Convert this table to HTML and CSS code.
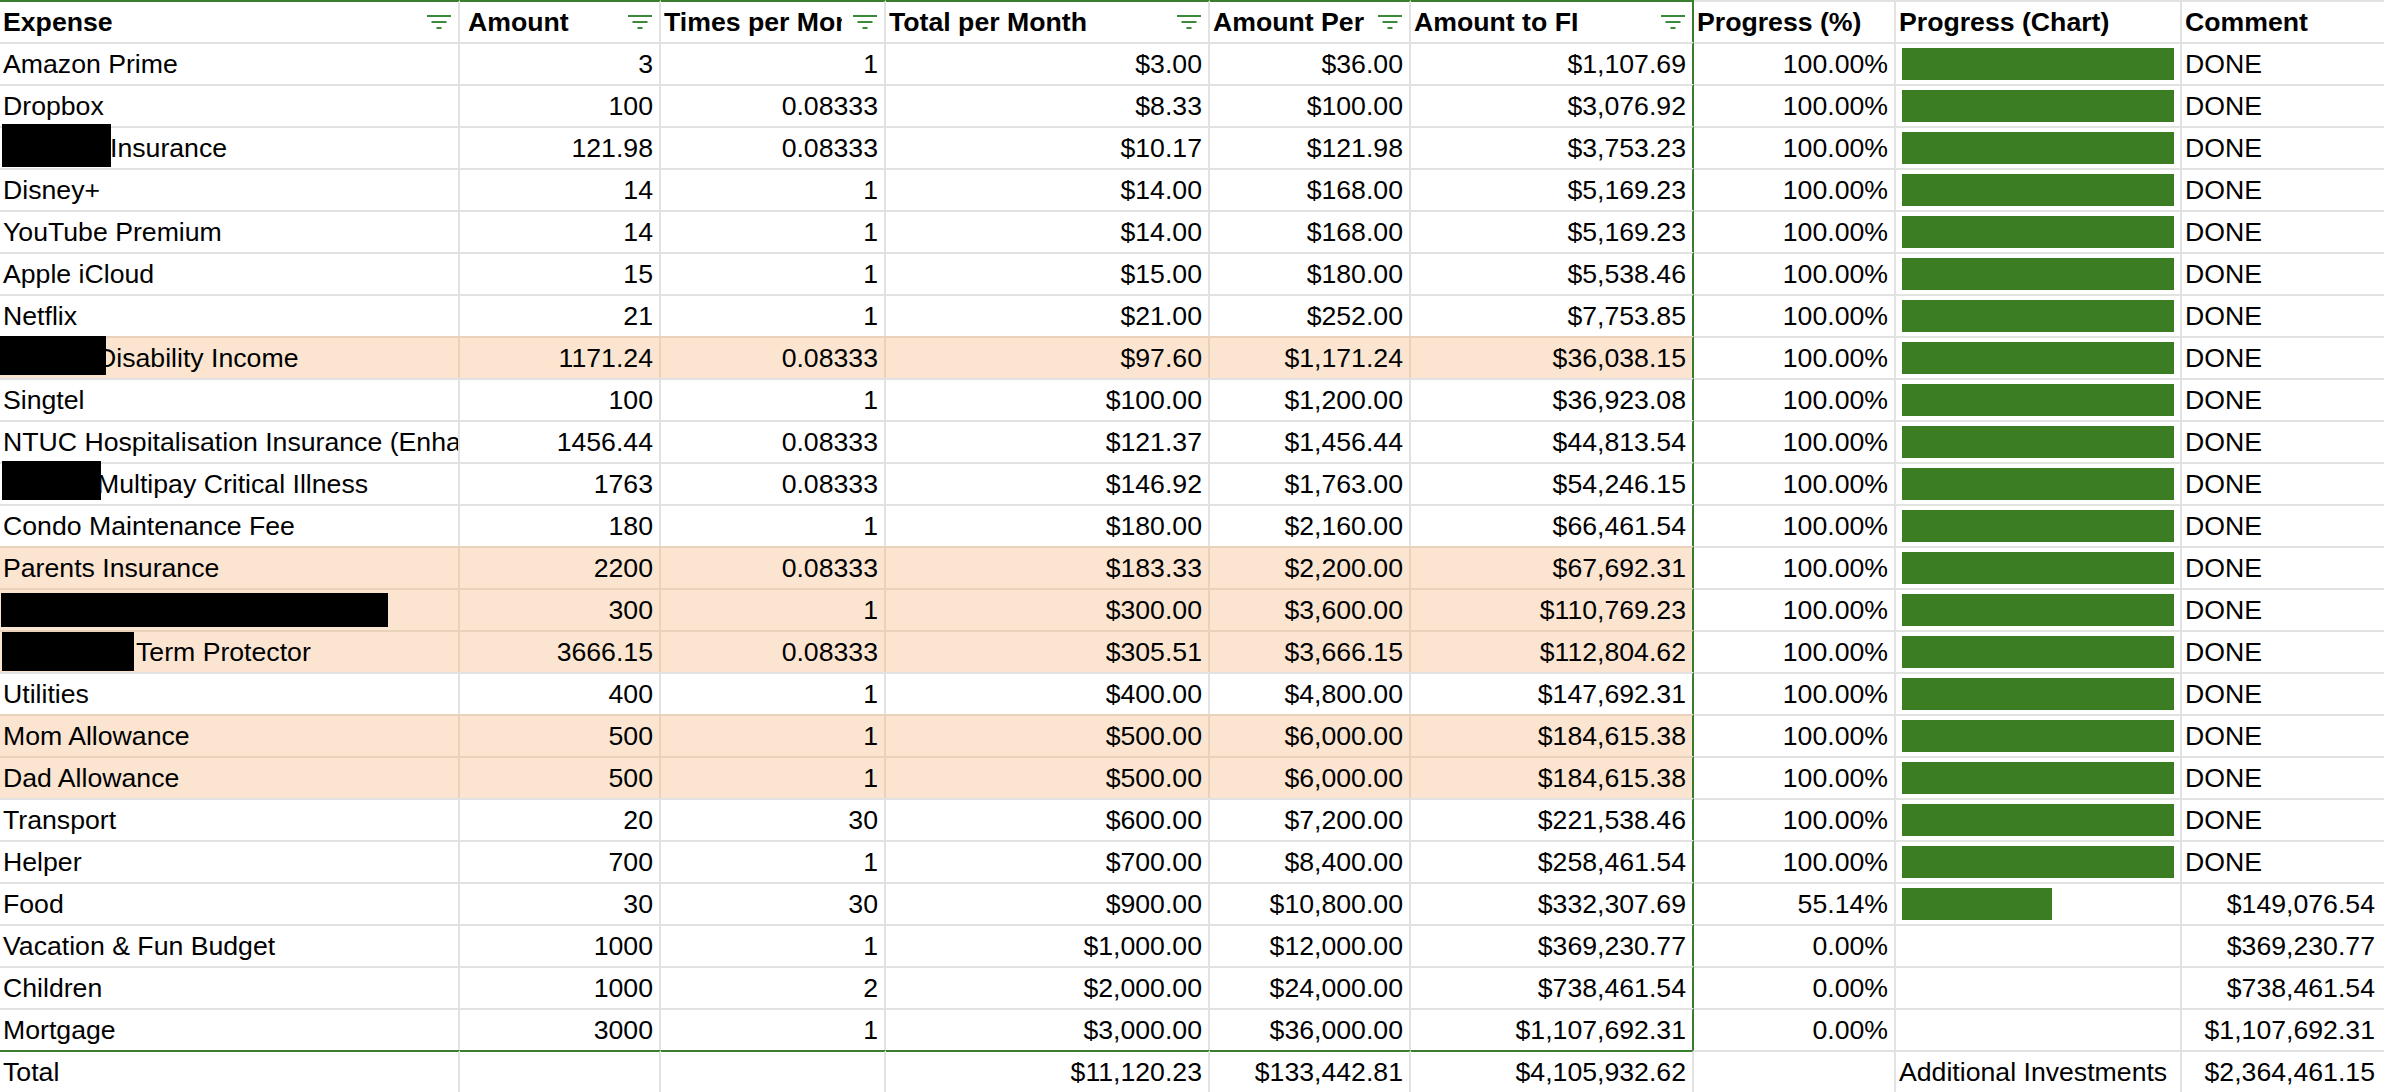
FILE: index.html
```html
<!DOCTYPE html>
<html>
<head>
<meta charset="utf-8">
<title>Expenses</title>
<link rel="stylesheet" href="styles.css">
</head>
<body>
<div class="sheet">
  <!-- header -->
  <div class="c h gt"><span class="lbl">Expense</span><svg class="fi" viewBox="0 0 24 16" width="24" height="16"><rect x="0" y="1" width="24" height="2"/><rect x="4.5" y="7" width="15" height="2"/><rect x="9.5" y="13" width="5" height="2"/></svg></div>
  <div class="c h gt pl8"><span class="lbl">Amount</span><svg class="fi" viewBox="0 0 24 16" width="24" height="16"><rect x="0" y="1" width="24" height="2"/><rect x="4.5" y="7" width="15" height="2"/><rect x="9.5" y="13" width="5" height="2"/></svg></div>
  <div class="c h gt"><span class="lbl">Times per Month</span><svg class="fi" viewBox="0 0 24 16" width="24" height="16"><rect x="0" y="1" width="24" height="2"/><rect x="4.5" y="7" width="15" height="2"/><rect x="9.5" y="13" width="5" height="2"/></svg></div>
  <div class="c h gt"><span class="lbl">Total per Month</span><svg class="fi" viewBox="0 0 24 16" width="24" height="16"><rect x="0" y="1" width="24" height="2"/><rect x="4.5" y="7" width="15" height="2"/><rect x="9.5" y="13" width="5" height="2"/></svg></div>
  <div class="c h gt"><span class="lbl">Amount Per Year</span><svg class="fi" viewBox="0 0 24 16" width="24" height="16"><rect x="0" y="1" width="24" height="2"/><rect x="4.5" y="7" width="15" height="2"/><rect x="9.5" y="13" width="5" height="2"/></svg></div>
  <div class="c h gt gr"><span class="lbl">Amount to FI</span><svg class="fi" viewBox="0 0 24 16" width="24" height="16"><rect x="0" y="1" width="24" height="2"/><rect x="4.5" y="7" width="15" height="2"/><rect x="9.5" y="13" width="5" height="2"/></svg></div>
  <div class="c h"><span class="lbl">Progress (%)</span></div>
  <div class="c h"><span class="lbl">Progress (Chart)</span></div>
  <div class="c h last"><span class="lbl">Comment</span></div>

  <!-- 1 -->
  <div class="c">Amazon Prime</div>
  <div class="c r">3</div>
  <div class="c r">1</div>
  <div class="c r">$3.00</div>
  <div class="c r">$36.00</div>
  <div class="c r gr">$1,107.69</div>
  <div class="c r">100.00%</div>
  <div class="c bc"><div class="bar" style="width:100%"></div></div>
  <div class="c last">DONE</div>

  <!-- 2 -->
  <div class="c">Dropbox</div>
  <div class="c r">100</div>
  <div class="c r">0.08333</div>
  <div class="c r">$8.33</div>
  <div class="c r">$100.00</div>
  <div class="c r gr">$3,076.92</div>
  <div class="c r">100.00%</div>
  <div class="c bc"><div class="bar" style="width:100%"></div></div>
  <div class="c last">DONE</div>

  <!-- 3 -->
  <div class="c rel p110"><span class="redact rd-ins"></span>Insurance</div>
  <div class="c r">121.98</div>
  <div class="c r">0.08333</div>
  <div class="c r">$10.17</div>
  <div class="c r">$121.98</div>
  <div class="c r gr">$3,753.23</div>
  <div class="c r">100.00%</div>
  <div class="c bc"><div class="bar" style="width:100%"></div></div>
  <div class="c last">DONE</div>

  <!-- 4 -->
  <div class="c">Disney+</div>
  <div class="c r">14</div>
  <div class="c r">1</div>
  <div class="c r">$14.00</div>
  <div class="c r">$168.00</div>
  <div class="c r gr">$5,169.23</div>
  <div class="c r">100.00%</div>
  <div class="c bc"><div class="bar" style="width:100%"></div></div>
  <div class="c last">DONE</div>

  <!-- 5 -->
  <div class="c">YouTube Premium</div>
  <div class="c r">14</div>
  <div class="c r">1</div>
  <div class="c r">$14.00</div>
  <div class="c r">$168.00</div>
  <div class="c r gr">$5,169.23</div>
  <div class="c r">100.00%</div>
  <div class="c bc"><div class="bar" style="width:100%"></div></div>
  <div class="c last">DONE</div>

  <!-- 6 -->
  <div class="c">Apple iCloud</div>
  <div class="c r">15</div>
  <div class="c r">1</div>
  <div class="c r">$15.00</div>
  <div class="c r">$180.00</div>
  <div class="c r gr">$5,538.46</div>
  <div class="c r">100.00%</div>
  <div class="c bc"><div class="bar" style="width:100%"></div></div>
  <div class="c last">DONE</div>

  <!-- 7 -->
  <div class="c">Netflix</div>
  <div class="c r">21</div>
  <div class="c r">1</div>
  <div class="c r">$21.00</div>
  <div class="c r">$252.00</div>
  <div class="c r gr">$7,753.85</div>
  <div class="c r">100.00%</div>
  <div class="c bc"><div class="bar" style="width:100%"></div></div>
  <div class="c last">DONE</div>

  <!-- 8 -->
  <div class="c hl rel p97"><span class="redact rd-dis"></span>Disability Income</div>
  <div class="c r hl">1171.24</div>
  <div class="c r hl">0.08333</div>
  <div class="c r hl">$97.60</div>
  <div class="c r hl">$1,171.24</div>
  <div class="c r hl gr">$36,038.15</div>
  <div class="c r">100.00%</div>
  <div class="c bc"><div class="bar" style="width:100%"></div></div>
  <div class="c last">DONE</div>

  <!-- 9 -->
  <div class="c">Singtel</div>
  <div class="c r">100</div>
  <div class="c r">1</div>
  <div class="c r">$100.00</div>
  <div class="c r">$1,200.00</div>
  <div class="c r gr">$36,923.08</div>
  <div class="c r">100.00%</div>
  <div class="c bc"><div class="bar" style="width:100%"></div></div>
  <div class="c last">DONE</div>

  <!-- 10 -->
  <div class="c">NTUC Hospitalisation Insurance (Enhanced)</div>
  <div class="c r">1456.44</div>
  <div class="c r">0.08333</div>
  <div class="c r">$121.37</div>
  <div class="c r">$1,456.44</div>
  <div class="c r gr">$44,813.54</div>
  <div class="c r">100.00%</div>
  <div class="c bc"><div class="bar" style="width:100%"></div></div>
  <div class="c last">DONE</div>

  <!-- 11 -->
  <div class="c rel p97"><span class="redact rd-mul"></span>Multipay Critical Illness</div>
  <div class="c r">1763</div>
  <div class="c r">0.08333</div>
  <div class="c r">$146.92</div>
  <div class="c r">$1,763.00</div>
  <div class="c r gr">$54,246.15</div>
  <div class="c r">100.00%</div>
  <div class="c bc"><div class="bar" style="width:100%"></div></div>
  <div class="c last">DONE</div>

  <!-- 12 -->
  <div class="c">Condo Maintenance Fee</div>
  <div class="c r">180</div>
  <div class="c r">1</div>
  <div class="c r">$180.00</div>
  <div class="c r">$2,160.00</div>
  <div class="c r gr">$66,461.54</div>
  <div class="c r">100.00%</div>
  <div class="c bc"><div class="bar" style="width:100%"></div></div>
  <div class="c last">DONE</div>

  <!-- 13 -->
  <div class="c hl">Parents Insurance</div>
  <div class="c r hl">2200</div>
  <div class="c r hl">0.08333</div>
  <div class="c r hl">$183.33</div>
  <div class="c r hl">$2,200.00</div>
  <div class="c r hl gr">$67,692.31</div>
  <div class="c r">100.00%</div>
  <div class="c bc"><div class="bar" style="width:100%"></div></div>
  <div class="c last">DONE</div>

  <!-- 14 -->
  <div class="c hl rel"><span class="redact rd-full"></span></div>
  <div class="c r hl">300</div>
  <div class="c r hl">1</div>
  <div class="c r hl">$300.00</div>
  <div class="c r hl">$3,600.00</div>
  <div class="c r hl gr">$110,769.23</div>
  <div class="c r">100.00%</div>
  <div class="c bc"><div class="bar" style="width:100%"></div></div>
  <div class="c last">DONE</div>

  <!-- 15 -->
  <div class="c hl rel p136"><span class="redact rd-term"></span>Term Protector</div>
  <div class="c r hl">3666.15</div>
  <div class="c r hl">0.08333</div>
  <div class="c r hl">$305.51</div>
  <div class="c r hl">$3,666.15</div>
  <div class="c r hl gr">$112,804.62</div>
  <div class="c r">100.00%</div>
  <div class="c bc"><div class="bar" style="width:100%"></div></div>
  <div class="c last">DONE</div>

  <!-- 16 -->
  <div class="c">Utilities</div>
  <div class="c r">400</div>
  <div class="c r">1</div>
  <div class="c r">$400.00</div>
  <div class="c r">$4,800.00</div>
  <div class="c r gr">$147,692.31</div>
  <div class="c r">100.00%</div>
  <div class="c bc"><div class="bar" style="width:100%"></div></div>
  <div class="c last">DONE</div>

  <!-- 17 -->
  <div class="c hl">Mom Allowance</div>
  <div class="c r hl">500</div>
  <div class="c r hl">1</div>
  <div class="c r hl">$500.00</div>
  <div class="c r hl">$6,000.00</div>
  <div class="c r hl gr">$184,615.38</div>
  <div class="c r">100.00%</div>
  <div class="c bc"><div class="bar" style="width:100%"></div></div>
  <div class="c last">DONE</div>

  <!-- 18 -->
  <div class="c hl">Dad Allowance</div>
  <div class="c r hl">500</div>
  <div class="c r hl">1</div>
  <div class="c r hl">$500.00</div>
  <div class="c r hl">$6,000.00</div>
  <div class="c r hl gr">$184,615.38</div>
  <div class="c r">100.00%</div>
  <div class="c bc"><div class="bar" style="width:100%"></div></div>
  <div class="c last">DONE</div>

  <!-- 19 -->
  <div class="c">Transport</div>
  <div class="c r">20</div>
  <div class="c r">30</div>
  <div class="c r">$600.00</div>
  <div class="c r">$7,200.00</div>
  <div class="c r gr">$221,538.46</div>
  <div class="c r">100.00%</div>
  <div class="c bc"><div class="bar" style="width:100%"></div></div>
  <div class="c last">DONE</div>

  <!-- 20 -->
  <div class="c">Helper</div>
  <div class="c r">700</div>
  <div class="c r">1</div>
  <div class="c r">$700.00</div>
  <div class="c r">$8,400.00</div>
  <div class="c r gr">$258,461.54</div>
  <div class="c r">100.00%</div>
  <div class="c bc"><div class="bar" style="width:100%"></div></div>
  <div class="c last">DONE</div>

  <!-- 21 -->
  <div class="c">Food</div>
  <div class="c r">30</div>
  <div class="c r">30</div>
  <div class="c r">$900.00</div>
  <div class="c r">$10,800.00</div>
  <div class="c r gr">$332,307.69</div>
  <div class="c r">55.14%</div>
  <div class="c bc"><div class="bar" style="width:55.14%"></div></div>
  <div class="c r last">$149,076.54</div>

  <!-- 22 -->
  <div class="c">Vacation &amp; Fun Budget</div>
  <div class="c r">1000</div>
  <div class="c r">1</div>
  <div class="c r">$1,000.00</div>
  <div class="c r">$12,000.00</div>
  <div class="c r gr">$369,230.77</div>
  <div class="c r">0.00%</div>
  <div class="c bc"></div>
  <div class="c r last">$369,230.77</div>

  <!-- 23 -->
  <div class="c">Children</div>
  <div class="c r">1000</div>
  <div class="c r">2</div>
  <div class="c r">$2,000.00</div>
  <div class="c r">$24,000.00</div>
  <div class="c r gr">$738,461.54</div>
  <div class="c r">0.00%</div>
  <div class="c bc"></div>
  <div class="c r last">$738,461.54</div>

  <!-- 24 -->
  <div class="c">Mortgage</div>
  <div class="c r">3000</div>
  <div class="c r">1</div>
  <div class="c r">$3,000.00</div>
  <div class="c r">$36,000.00</div>
  <div class="c r gr">$1,107,692.31</div>
  <div class="c r">0.00%</div>
  <div class="c bc"></div>
  <div class="c r last">$1,107,692.31</div>

  <!-- total -->
  <div class="c gt">Total</div>
  <div class="c gt"></div>
  <div class="c gt"></div>
  <div class="c r gt">$11,120.23</div>
  <div class="c r gt">$133,442.81</div>
  <div class="c r gt">$4,105,932.62</div>
  <div class="c"></div>
  <div class="c">Additional Investments</div>
  <div class="c r last">$2,364,461.15</div>
</div>
</body>
</html>
```

FILE: styles.css
```css
* {
  box-sizing: border-box;
}

html,
body {
  margin: 0;
  padding: 0;
  background: #ffffff;
}

body {
  font-family: "Liberation Sans", Arial, sans-serif;
  font-size: 26.67px;
  color: #000000;
  overflow: hidden;
}

.sheet {
  display: grid;
  grid-template-columns: 460px 201px 225px 324px 201px 283px 202px 286px 202px;
  grid-auto-rows: 42px;
  width: 2384px;
}

.c {
  border-top: 2px solid #e2e2e2;
  border-right: 2px solid #e2e2e2;
  padding: 0 6px 0 3px;
  line-height: 40px;
  white-space: nowrap;
  overflow: hidden;
}

.r {
  text-align: right;
}

.last {
  border-right: none;
  padding-right: 9px;
}

.h {
  display: flex;
  align-items: center;
  font-weight: bold;
  padding-right: 7px;
}

.h .lbl {
  flex: 1;
  min-width: 0;
  overflow: hidden;
  margin-right: 11px;
}

.pl8 {
  padding-left: 8px;
}

.fi {
  flex: none;
  display: block;
  fill: #3b8a3a;
}

.hl {
  background: #fbe5d0;
  border-top-color: #e8d2bc;
  border-right-color: #e8d2bc;
}

.gt {
  border-top-color: #3b7d2f;
}

.gr {
  border-right-color: #3b7d2f;
}

.bc {
  padding: 4px 6px;
}

.bar {
  height: 32px;
  background: #3a7d23;
}

.rel {
  position: relative;
  overflow: visible;
}

.p110 {
  padding-left: 110px;
}

.p97 {
  padding-left: 97px;
}

.p136 {
  padding-left: 136px;
}

.redact {
  position: absolute;
  background: #000000;
}

.rd-ins {
  left: 2px;
  top: -4px;
  width: 109px;
  height: 43px;
}

.rd-dis {
  left: 0;
  top: -2px;
  width: 106px;
  height: 39px;
}

.rd-mul {
  left: 2px;
  top: -3px;
  width: 99px;
  height: 39px;
}

.rd-full {
  left: 1px;
  top: 3px;
  width: 387px;
  height: 34px;
}

.rd-term {
  left: 2px;
  top: 0;
  width: 132px;
  height: 39px;
}
```
